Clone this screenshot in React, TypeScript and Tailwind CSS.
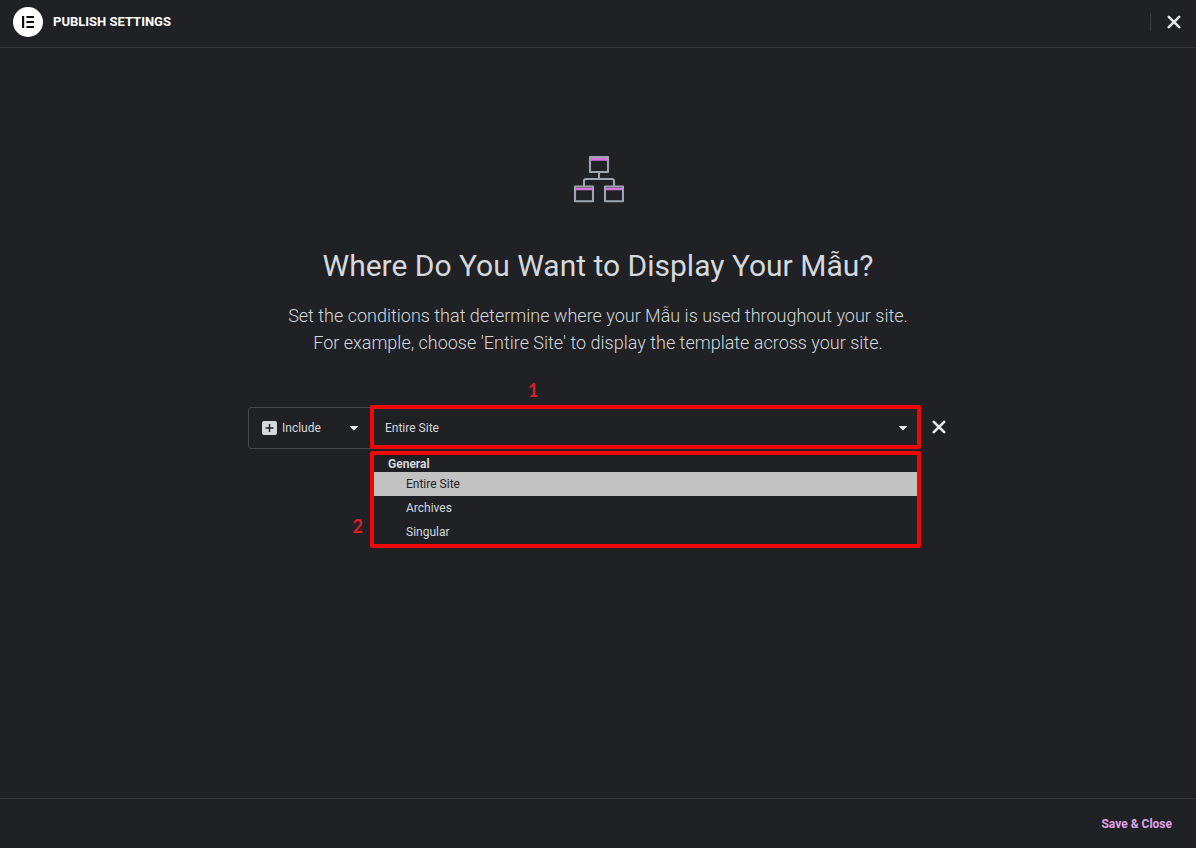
import { useState } from "react"

interface SelectProps {
  label: string
  value: string
  options: string[]
  onChange: (value: string) => void
  className: string
}

const locations = ["Entire Site", "Archives", "Singular"]

function CloseIcon() {
  return (
    <svg width="14" height="14" viewBox="0 0 14 14" fill="none" aria-hidden="true">
      <path d="M1.8 1.8l10.4 10.4M12.2 1.8L1.8 12.2" stroke="currentColor" strokeWidth="2.6" strokeLinecap="round" />
    </svg>
  )
}

function Caret() {
  return (
    <svg
      className="pointer-events-none absolute right-3 top-1/2 -translate-y-1/2"
      width="10"
      height="6"
      viewBox="0 0 10 6"
      aria-hidden="true"
    >
      <path d="M1.2 1h7.6c.4 0 .5.4.3.6L5.6 5a.9.9 0 0 1-1.2 0L.9 1.6C.7 1.4.8 1 1.2 1z" fill="#e6e8ea" />
    </svg>
  )
}

function Logo() {
  return (
    <svg width="30" height="30" viewBox="0 0 30 30" aria-hidden="true">
      <circle cx="15" cy="15" r="15" fill="#fff" />
      <path d="M9 9h2.2v12H9zM13.4 9H21v2h-7.6zM13.4 14H21v2h-7.6zM13.4 19H21v2h-7.6z" fill="#0c0d0e" />
    </svg>
  )
}

function SitemapIcon() {
  return (
    <svg width="52" height="47" viewBox="-2 0 52 47" fill="none" aria-hidden="true">
      <path d="M16 3.4h18M1 33h18M31 33h18" stroke="#d873e0" strokeWidth="2.6" />
      <g stroke="#9da5ae" strokeWidth="2.1">
        <path d="M16 1h18v15H16zM1 30.5h18v14.7H1zM31 30.5h18v14.7H31z" strokeLinejoin="round" />
        <path d="M25 16v7M10 30v-5q0-2 2-2h26q2 0 2 2v5" />
      </g>
    </svg>
  )
}

function Select({ label, value, options, onChange, className }: SelectProps) {
  return (
    <>
      <select
        aria-label={label}
        value={value}
        onChange={(e) => onChange(e.target.value)}
        className={`h-full w-full appearance-none bg-transparent pr-8 text-xs outline-none ${className}`}
      >
        {options.map((option) => (
          <option key={option} className="bg-[#1f2124]">
            {option}
          </option>
        ))}
      </select>
      <Caret />
    </>
  )
}

export default function App() {
  const [mode, setMode] = useState("Include")
  const [location, setLocation] = useState("Entire Site")

  return (
    <div className="flex min-h-screen flex-col bg-[#1f2124] font-[Roboto,sans-serif] text-[#d5d8dc]">
      <header className="flex h-12 items-center justify-between border-b border-[#35383c] pl-[13px] pr-[15px] pb-1">
        <div className="flex items-center gap-[10px]">
          <Logo />
          <h1 className="text-[13px] font-bold uppercase leading-5 text-white">Publish Settings</h1>
        </div>
        <div className="flex h-[18px] items-center border-l border-[#35383c] pl-4">
          <button type="button" aria-label="Close" className="text-[#e6e8ea]">
            <CloseIcon />
          </button>
        </div>
      </header>

      <main className="flex flex-1 flex-col items-center px-6 pt-[108px]">
        <SitemapIcon />
        <h2 className="mt-[45px] text-center text-[30px] leading-9">Where Do You Want to Display Your Mẫu?</h2>
        <p className="mt-[18px] text-center text-lg font-light leading-[27px]">
          Set the conditions that determine where your Mẫu is used throughout your site.
          <br />
          For example, choose 'Entire Site' to display the template across your site.
        </p>

        {/* Condition row */}
        <div className="mt-[51px] flex w-full max-w-[700px] items-center">
          <div className="flex h-[42px] flex-1 rounded-[3px] border border-[#45484d]">
            <div className="relative w-[122px]">
              <svg
                className="pointer-events-none absolute left-[13px] top-1/2 -translate-y-1/2"
                width="15"
                height="14"
                viewBox="0 0 15 14"
                aria-hidden="true"
              >
                <rect width="15" height="14" rx="2" fill="#d5d8dc" />
                <path d="M7.5 3v8M3.5 7h8" stroke="#1f2124" strokeWidth="1.4" />
              </svg>
              <Select
                label="Condition type"
                value={mode}
                options={["Include", "Exclude"]}
                onChange={setMode}
                className="pl-[33px]"
              />
            </div>

            <div className="relative -mr-px flex-1">
              <Select
                label="Display location"
                value={location}
                options={locations}
                onChange={setLocation}
                className="pl-[14px]"
              />

              {/* Step 1 marker */}
              <div className="pointer-events-none absolute -left-px -right-px -top-[3px] -bottom-px rounded-[2px] border-4 border-[#f00808]" />
              <span className="absolute bottom-full left-[157px] mb-[6px] font-[Lato,sans-serif] text-lg font-bold leading-6 text-[#d81f2a]">
                1
              </span>

              {/* Open location menu with step 2 marker */}
              <div className="absolute -left-px -right-px top-full mt-[3px] rounded-[2px] border-4 border-[#f00808] bg-[#1f2124] text-xs">
                <p className="pl-[14px] pt-px font-bold leading-4">General</p>
                <ul role="listbox" aria-label="General">
                  {locations.map((item) => (
                    <li
                      key={item}
                      role="option"
                      aria-selected={item === location}
                      onClick={() => setLocation(item)}
                      className={`cursor-pointer pl-8 leading-6 ${
                        item === location ? "bg-[#c2c2c2] text-[#1f2124]" : ""
                      }`}
                    >
                      {item}
                    </li>
                  ))}
                </ul>
                <span className="absolute bottom-[6px] right-full mr-[11px] font-[Lato,sans-serif] text-lg font-bold leading-6 text-[#d81f2a]">
                  2
                </span>
              </div>
            </div>
          </div>
          <button type="button" aria-label="Remove condition" className="-mt-[2px] pl-3 pr-[2px] text-[#e6e8ea]">
            <CloseIcon />
          </button>
        </div>
      </main>

      <footer className="flex h-[50px] items-center justify-end border-t border-[#35383c] px-6">
        <button type="button" className="text-xs font-bold text-[#e2a3ea]">
          Save &amp; Close
        </button>
      </footer>
    </div>
  )
}
